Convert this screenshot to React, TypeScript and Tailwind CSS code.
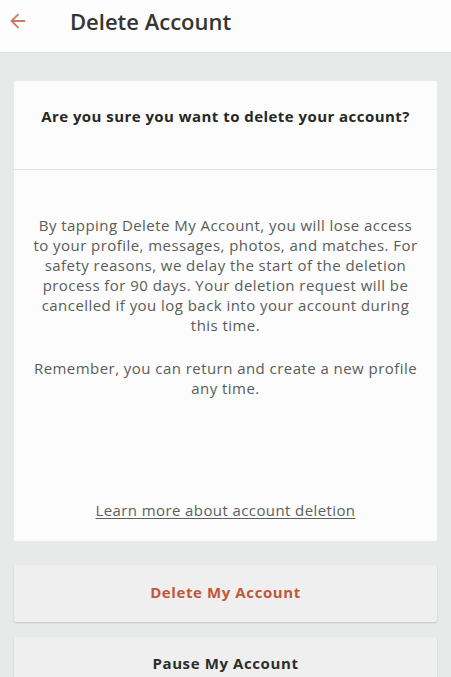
import { ArrowLeft } from 'lucide-react';

export default function App() {
  return (
    <div
      className="w-[451px] h-[677px] overflow-hidden bg-[#e8eae9] flex flex-col"
      style={{ fontFamily: '"Open Sans", Lato, sans-serif' }}
    >
      {/* Header */}
      <div className="h-[53px] shrink-0 bg-[#fcfdfc] border-b border-[#dcdfdd] flex items-start pt-[8px]">
        <ArrowLeft className="w-[22px] h-[22px] ml-[7px] mt-[2px] text-[#c97a62]" strokeWidth={2} />
        <h1 className="ml-[41px] text-[22px] leading-[26px] font-semibold text-[#333533]">
          Delete Account
        </h1>
      </div>

      <div className="px-[14px] pt-[28px] flex flex-col">
        {/* Card */}
        <div className="bg-[#fbfcfb] rounded-[2px] flex flex-col">
          <div className="h-[89px] pt-[25px] flex justify-center border-b border-[#dfe2e0]">
            <p className="text-[15px] leading-[20px] font-bold tracking-[0.45px] text-[#262826]">
              Are you sure you want to delete your account?
            </p>
          </div>
          <div className="pt-[45px] flex flex-col items-center text-center text-[15px] leading-[20px] tracking-[0.45px] text-[#5a5c5a] whitespace-nowrap">
            <p>
              By tapping Delete My Account, you will lose access
              <br />
              to your profile, messages, photos, and matches. For
              <br />
              safety reasons, we delay the start of the deletion
              <br />
              process for 90 days. Your deletion request will be
              <br />
              cancelled if you log back into your account during
              <br />
              this time.
            </p>
            <p className="mt-[23px]">
              Remember, you can return and create a new profile
              <br />
              any time.
            </p>
          </div>
          <div className="pt-[100px] pb-[19px] text-center">
            <span className="text-[15px] tracking-[0.4px] text-[#5e605e] underline underline-offset-2">
              Learn more about account deletion
            </span>
          </div>
        </div>

        {/* Buttons */}
        <button className="mt-[24px] h-[57px] bg-[#eeefee] shadow-[0_1px_2px_rgba(0,0,0,0.15)] rounded-[2px] text-[15px] font-bold tracking-[0.6px] text-[#c0583a] pb-[3px]">
          Delete My Account
        </button>
        <button className="mt-[15px] h-[57px] bg-[#eeefee] shadow-[0_1px_2px_rgba(0,0,0,0.15)] rounded-[2px] text-[15px] font-bold tracking-[0.6px] text-[#2c2e2c] pb-[4px]">
          Pause My Account
        </button>
      </div>
    </div>
  );
}
